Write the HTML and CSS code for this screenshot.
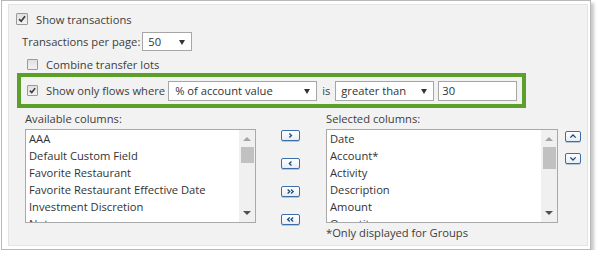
FILE: index.html
```html
<!DOCTYPE html>
<html lang="en">
  <head>
    <meta charset="UTF-8" />
    <title>Transactions settings</title>
    <link rel="stylesheet" href="styles.css">
  </head>
  <body>
    <div class="frame">
      <div class="panel">
        <label class="row row-show">
          <span class="cb">
            <svg viewBox="0 0 12 12"><path d="M2.5 6.2 L5 8.7 L9.6 2.8" /></svg>
          </span>
          Show transactions
        </label>

        <div class="row row-per-page">
          Transactions per page:
          <span class="select sel-page">50<i class="arrow"></i></span>
        </div>

        <label class="row row-combine">
          <span class="cb"></span>
          Combine transfer lots
        </label>

        <!-- highlighted filter row -->
        <div class="flows">
          <span class="cb">
            <svg viewBox="0 0 12 12"><path d="M2.5 6.2 L5 8.7 L9.6 2.8" /></svg>
          </span>
          <span class="flows-text">Show only flows where</span>
          <span class="select sel-metric">% of account value<i class="arrow"></i></span>
          <span class="is">is</span>
          <span class="select sel-op">greater than<i class="arrow"></i></span>
          <span class="text-input">30</span>
        </div>

        <div class="columns">
          <div class="col">
            <div class="col-label">Available columns:</div>
            <div class="listbox">
              <ul class="items">
                <li>AAA</li>
                <li>Default Custom Field</li>
                <li>Favorite Restaurant</li>
                <li>Favorite Restaurant Effective Date</li>
                <li>Investment Discretion</li>
                <li>Notes</li>
              </ul>
              <div class="scrollbar">
                <span class="sb-up"></span>
                <span class="sb-thumb"></span>
                <span class="sb-down"></span>
              </div>
            </div>
          </div>

          <div class="movers">
            <button class="mini-btn wide"><svg viewBox="0 0 19 10"><path d="M8.2 2.8 L10.6 5 L8.2 7.2" /></svg></button>
            <button class="mini-btn wide"><svg viewBox="0 0 19 10"><path d="M10.6 2.8 L8.2 5 L10.6 7.2" /></svg></button>
            <button class="mini-btn wide"><svg viewBox="0 0 19 10"><path d="M6.3 2.8 L8.7 5 L6.3 7.2 M10.1 2.8 L12.5 5 L10.1 7.2" /></svg></button>
            <button class="mini-btn wide"><svg viewBox="0 0 19 10"><path d="M8.7 2.8 L6.3 5 L8.7 7.2 M12.5 2.8 L10.1 5 L12.5 7.2" /></svg></button>
          </div>

          <div class="col col-selected">
            <div class="col-label">Selected columns:</div>
            <div class="listbox">
              <ul class="items">
                <li>Date</li>
                <li>Account*</li>
                <li>Activity</li>
                <li>Description</li>
                <li>Amount</li>
                <li>Quantity</li>
              </ul>
              <div class="scrollbar">
                <span class="sb-up"></span>
                <span class="sb-thumb tall"></span>
                <span class="sb-down"></span>
              </div>
            </div>
            <div class="note">*Only displayed for Groups</div>
          </div>

          <div class="orderers">
            <button class="mini-btn"><svg viewBox="0 0 15 10"><path d="M4.5 6.3 L7.5 3.3 L10.5 6.3" /></svg></button>
            <button class="mini-btn"><svg viewBox="0 0 15 10"><path d="M4.5 3.7 L7.5 6.7 L10.5 3.7" /></svg></button>
          </div>
        </div>
      </div>
    </div>
  </body>
</html>
```

FILE: styles.css
```css
* {
  box-sizing: border-box;
}

body {
  margin: 0;
  background: #fff;
  font-family: "Open Sans", "Noto Sans", sans-serif;
  font-size: 11.2px;
  color: #3d3d3d;
}

/* Outer white card */
.frame {
  margin-left: 1px;
  width: 590px;
  height: 250px;
  border: 1px solid #b9b9b9;
  padding: 3px 2px 3px 6px;
  background: #fff;
  box-shadow: 3px 3px 3px rgba(0, 0, 0, 0.22);
}

.panel {
  height: 100%;
  background: #f2f2f2;
  border: 1px solid #e4e4e4;
  padding-top: 5px;
}

.row {
  display: flex;
  align-items: center;
  white-space: nowrap;
}

.row-show {
  height: 18px;
  margin-left: 7px;
  gap: 8px;
}

.row-per-page {
  height: 19px;
  margin-top: 4px;
  margin-left: 13px;
}

.row-combine {
  height: 17px;
  margin-top: 5px;
  margin-left: 18px;
  gap: 8px;
}

/* Checkbox */
.cb {
  width: 12px;
  height: 12px;
  flex: none;
  border: 1px solid #9a9a9a;
  border-radius: 1px;
  background: linear-gradient(#e0e0e0, #f2f2f2);
  display: flex;
}

.cb svg {
  width: 100%;
  height: 100%;
}

.cb path {
  fill: none;
  stroke: #383838;
  stroke-width: 2;
}

.row-combine .cb,
.flows .cb {
  width: 11px;
  height: 11px;
}

/* Select look-alikes */
.select {
  position: relative;
  display: flex;
  align-items: center;
  height: 19px;
  padding-left: 5px;
  background: #fff;
  border: 1px solid #a6a6a6;
  color: #333;
}

.arrow {
  position: absolute;
  right: 6px;
  top: 50%;
  margin-top: -2px;
  border-left: 3.5px solid transparent;
  border-right: 3.5px solid transparent;
  border-top: 5px solid #333;
}

.sel-page {
  width: 50px;
  margin-left: 2px;
}

/* Highlighted filter row */
.flows {
  display: flex;
  align-items: center;
  white-space: nowrap;
  width: 509px;
  height: 35px;
  margin-left: 8px;
  padding-left: 6px;
  border: 4px solid #5ca02a;
}

.flows-text {
  margin-left: 8px;
}

.flows .select {
  height: 20px;
}

.sel-metric {
  width: 149px;
  margin-left: 3px;
  padding-left: 6px;
}

.is {
  margin-left: 5px;
}

.sel-op {
  width: 99px;
  margin-left: 5px;
}

.text-input {
  display: flex;
  align-items: center;
  width: 79px;
  height: 20px;
  margin-left: 4px;
  padding-left: 3px;
  background: #fff;
  border: 1px solid #a6a6a6;
  color: #333;
}

/* Column pickers */
.columns {
  display: flex;
  align-items: flex-start;
  margin-top: 2px;
  margin-left: 16px;
}

.col {
  width: 231px;
}

.col-selected {
  width: 232px;
  margin-left: 26px;
}

.col-label {
  height: 17px;
  line-height: 17px;
  margin-bottom: 2px;
}

.listbox {
  display: flex;
  height: 94px;
  background: #fff;
  border: 1px solid #a9a9a9;
  overflow: hidden;
}

.items {
  flex: 1;
  margin: 0;
  padding: 0 0 0 3px;
  list-style: none;
  color: #333;
  overflow: hidden;
}

.items li {
  height: 17px;
  line-height: 17px;
  white-space: nowrap;
}

.scrollbar {
  width: 16px;
  flex: none;
  background: #f0f0f0;
  display: flex;
  flex-direction: column;
  align-items: center;
}

.sb-up,
.sb-down {
  width: 0;
  height: 0;
  border-left: 4px solid transparent;
  border-right: 4px solid transparent;
}

.sb-up {
  margin-top: 7px;
  border-bottom: 4px solid #a3a3a3;
}

.sb-down {
  margin-top: auto;
  margin-bottom: 7px;
  border-top: 4px solid #505050;
}

.sb-thumb {
  width: 13px;
  height: 16px;
  margin-top: 6px;
  background: #c1c1c1;
}

.sb-thumb.tall {
  height: 22px;
}

.note {
  height: 17px;
  line-height: 17px;
  margin-top: 1px;
}

/* Small arrow buttons */
.movers {
  display: flex;
  flex-direction: column;
  gap: 17px;
  margin-top: 20px;
  margin-left: 25px;
}

.orderers {
  display: flex;
  flex-direction: column;
  gap: 11px;
  margin-top: 21px;
  margin-left: 7px;
}

.mini-btn {
  display: block;
  width: 16px;
  height: 11px;
  padding: 0;
  border: 1px solid #3a6ea5;
  border-radius: 2px;
  background: linear-gradient(#fff, #e9eef4);
  box-shadow: 0 1px 0 #b7c7d8;
}

.mini-btn.wide {
  width: 19px;
}

.mini-btn svg {
  display: block;
  width: 100%;
  height: 100%;
}

.mini-btn path {
  fill: none;
  stroke: #1c4a78;
  stroke-width: 1.4;
}
```
